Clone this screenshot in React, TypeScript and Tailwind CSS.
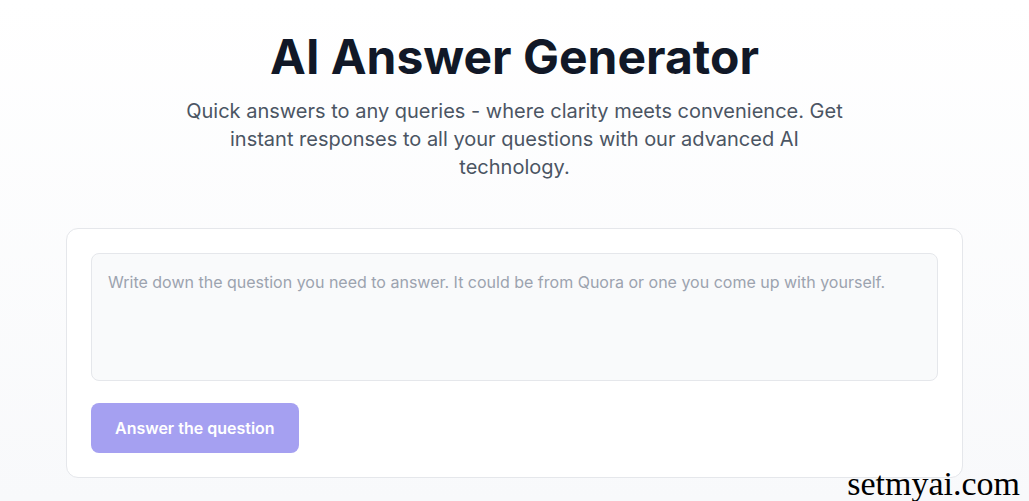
export default function App() {
  return (
    <div
      className="relative min-h-[501px] w-full bg-gradient-to-b from-white to-[#f8f9fb] pt-[27px]"
      style={{ fontFamily: "Inter, 'Noto Sans', sans-serif" }}
    >
      <div className="mx-auto flex max-w-[896px] flex-col items-center">
        <h1 className="text-[48px] font-bold leading-[60px] text-[#111827]">
          AI Answer Generator
        </h1>
        <p className="mt-[10px] max-w-[680px] text-center text-[20px] leading-[28px] text-[#4b5563]">
          Quick answers to any queries - where clarity meets convenience. Get
          instant responses to all your questions with our advanced AI
          technology.
        </p>
      </div>
      <div className="mx-auto mt-[47px] w-[897px] rounded-xl border border-[#e5e7eb] bg-white p-6">
        <textarea
          className="block h-[128px] w-full resize-none rounded-lg border border-[#e5e7eb] bg-[#f9fafb] px-4 py-4 text-[16px] leading-[24px] text-[#111827] outline-none placeholder:text-[#9ca3af]"
          placeholder="Write down the question you need to answer. It could be from Quora or one you come up with yourself."
        />
        <button className="mt-[22px] h-[50px] rounded-lg bg-[#a5a0f1] px-6 text-[16px] font-semibold text-white">
          Answer the question
        </button>
      </div>
      <div
        className="absolute bottom-[0px] right-[9px] text-[34px] leading-none text-black"
        style={{ fontFamily: "'Liberation Serif', serif" }}
      >
        setmyai.com
      </div>
    </div>
  );
}
